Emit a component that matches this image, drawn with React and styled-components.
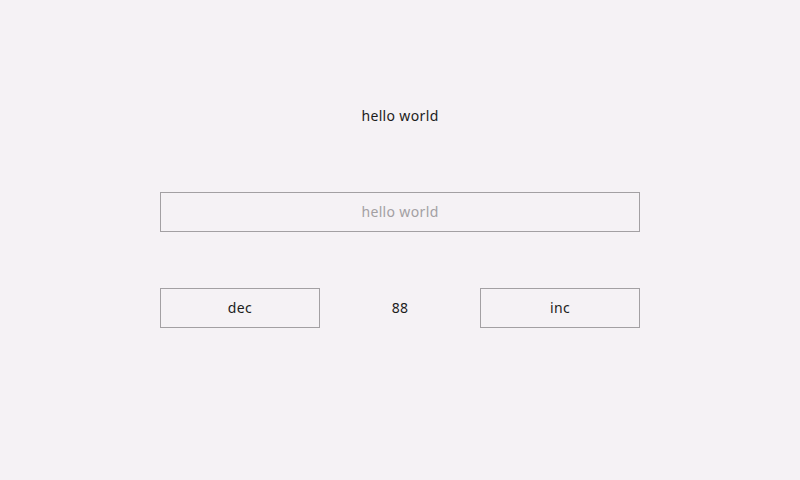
import styled, { createGlobalStyle } from 'styled-components';

const GlobalStyle = createGlobalStyle`
    html, body {
        margin: 0;
        padding: 0;
        background: #f5f2f5;
    }
    body {
        font-family: 'Noto Sans', 'Open Sans', sans-serif;
        color: #1c1c1c;
    }
`;

const Page = styled.main`
    width: 800px;
    height: 480px;
    display: flex;
    justify-content: center;
    padding-top: 96px;
    box-sizing: border-box;
`;

const Column = styled.div`
    width: 480px;
    display: flex;
    flex-direction: column;
    gap: 56px;
`;

// text sits ~1px above the box centre in the reference
const Label = styled.div`
    height: 40px;
    box-sizing: border-box;
    padding-bottom: 2px;
    display: flex;
    align-items: center;
    justify-content: center;
    font-size: 14px;
    letter-spacing: 0.35px;
`;

const Field = styled.input`
    height: 40px;
    width: 100%;
    box-sizing: border-box;
    margin: 0;
    padding: 0 0 2px;
    border: 1px solid #a3a0a3;
    background: transparent;
    font-family: inherit;
    font-size: 14px;
    letter-spacing: 0.35px;
    text-align: center;
    color: #1c1c1c;
    outline: none;

    &::placeholder {
        color: #a3a0a3;
    }
`;

const Row = styled.div`
    display: grid;
    grid-template-columns: repeat(3, 160px);
    height: 40px;
`;

const Button = styled.button`
    height: 40px;
    margin: 0;
    box-sizing: border-box;
    border: 1px solid #a3a0a3;
    background: transparent;
    font-family: inherit;
    font-size: 14px;
    letter-spacing: 0.35px;
    color: #1c1c1c;
    padding: 0 0 2px;
`;

function App() {
    return (
        <>
            <GlobalStyle />
            <Page>
                <Column>
                    <Label>hello world</Label>
                    <Field placeholder="hello world" />
                    <Row>
                        <Button>dec</Button>
                        <Label>88</Label>
                        <Button>inc</Button>
                    </Row>
                </Column>
            </Page>
        </>
    );
}

export default App;
